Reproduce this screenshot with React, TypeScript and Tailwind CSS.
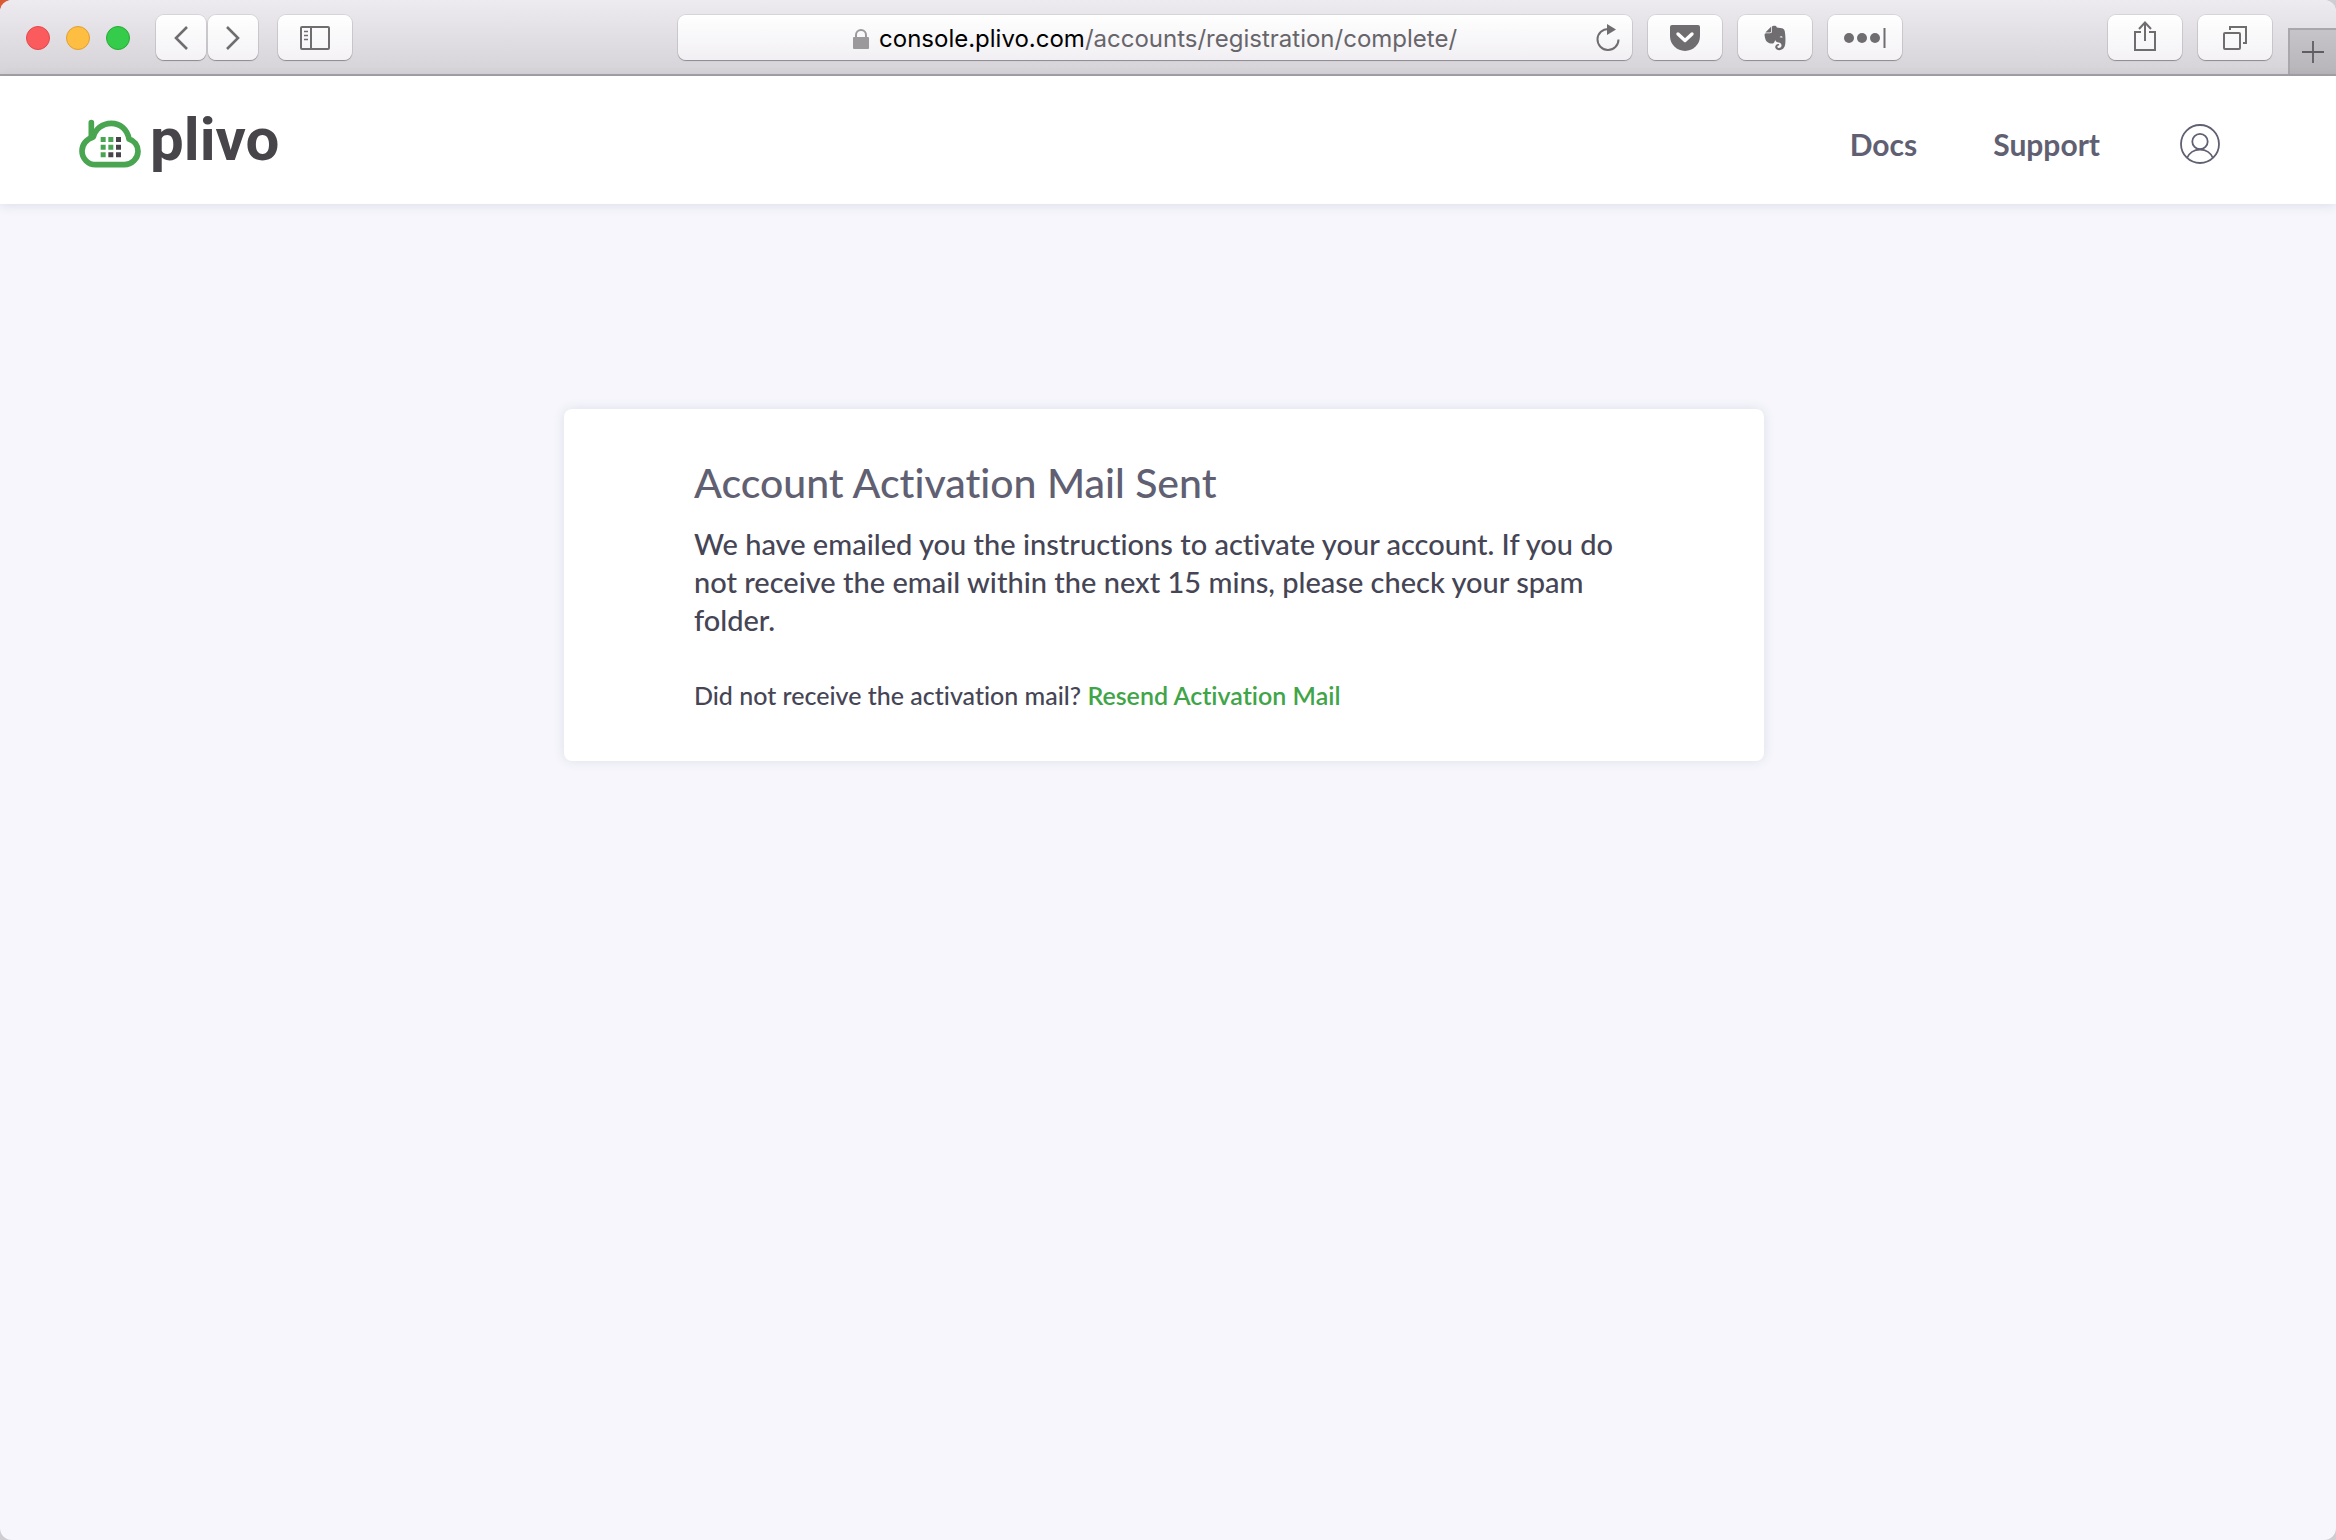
import type { ReactNode } from "react";
import { FaEvernote } from "react-icons/fa";

type ToolButtonProps = {
	label: string;
	narrow?: boolean;
	children: ReactNode;
};

function ToolButton({ label, narrow, children }: ToolButtonProps) {
	return (
		<button
			type="button"
			aria-label={label}
			className={`${narrow ? "w-[50px]" : "w-[74px]"} h-[45px] shrink-0 flex items-center justify-center rounded-lg
			bg-linear-to-b from-white to-[#f4f2f5] text-[#6f6d70]
			shadow-[0_0_0_1px_rgba(0,0,0,0.08),0_1px_1px_rgba(0,0,0,0.3)]`}
		>
			{children}
		</button>
	);
}

function BrowserBar() {
	return (
		<div className="flex items-start h-[76px] pt-[15px] pl-[26px] border-b-2 border-[#a3a0a5] bg-linear-to-b from-[#edebf0] to-[#d5d3d7]">
			{/* Window controls */}
			<div className="flex items-center gap-4 h-[45px] mr-[26px]">
				<span className="size-6 rounded-full bg-[#fc5b5e] border border-[#e2484b]" />
				<span className="size-6 rounded-full bg-[#fdbe41] border border-[#dfa034]" />
				<span className="size-6 rounded-full bg-[#35cb4b] border border-[#27aa35]" />
			</div>

			<div className="flex gap-0.5 mr-5">
				<ToolButton label="Back" narrow>
					<svg width="16" height="26" viewBox="0 0 16 26" fill="none" stroke="currentColor" strokeWidth="2.6">
						<path d="M14 2 3 13l11 11" />
					</svg>
				</ToolButton>
				<ToolButton label="Forward" narrow>
					<svg width="16" height="26" viewBox="0 0 16 26" fill="none" stroke="currentColor" strokeWidth="2.6">
						<path d="m2 2 11 11L2 24" />
					</svg>
				</ToolButton>
			</div>

			<ToolButton label="Sidebar">
				<svg width="30" height="24" viewBox="0 0 30 24" fill="none" stroke="currentColor" strokeWidth="2">
					<rect x="1" y="1" width="28" height="22" rx="1" />
					<path d="M11 1v22" />
					<path d="M4 5.5h4M4 9.5h4M4 13.5h4" strokeWidth="1.4" />
				</svg>
			</ToolButton>

			{/* Address */}
			<div className="ml-[14.1%] mr-4 flex-1 h-[45px] flex items-center rounded-lg bg-linear-to-b from-white to-[#f1eff3] shadow-[0_0_0_1px_rgba(0,0,0,0.08),0_1px_1px_rgba(0,0,0,0.3)]">
				<div className="flex-1 flex items-center justify-center gap-2.5 pl-9 pt-0.5 font-[Inter,sans-serif] text-2xl">
					<svg width="16" height="20" viewBox="0 0 16 20" className="text-[#9b999c]">
						<path d="M3 9V6a5 5 0 0 1 10 0v3" fill="none" stroke="currentColor" strokeWidth="2" />
						<rect y="8" width="16" height="12" rx="1" fill="currentColor" />
					</svg>
					<p className="text-black">
						console.plivo.com<span className="text-[#67656a]">/accounts/registration/complete/</span>
					</p>
				</div>
				<button type="button" aria-label="Reload" className="mr-3 text-[#6f6d70]">
					<svg width="24" height="28" viewBox="0 0 24 28">
						<path d="M12.5 5A10.5 10.5 0 1 0 22.5 15.5" fill="none" stroke="currentColor" strokeWidth="2" />
						<path d="M11 0v11l9-5.5z" fill="currentColor" />
					</svg>
				</button>
			</div>

			{/* Extensions */}
			<div className="flex gap-4">
				<ToolButton label="Pocket">
					<svg width="30" height="26" viewBox="0 0 30 26">
						<path d="M2 0h26a2 2 0 0 1 2 2v9a15 15 0 0 1-30 0V2a2 2 0 0 1 2-2z" fill="currentColor" />
						<path d="m8 9 7 6.5L22 9" fill="none" stroke="white" strokeWidth="3.4" strokeLinecap="round" strokeLinejoin="round" />
					</svg>
				</ToolButton>
				<ToolButton label="Evernote">
					<FaEvernote size={28} />
				</ToolButton>
				<ToolButton label="Passwords">
					<svg width="42" height="22" viewBox="0 0 42 22" fill="currentColor">
						<circle cx="5" cy="11" r="5" />
						<circle cx="18" cy="11" r="5" />
						<circle cx="31" cy="11" r="5" />
						<rect x="39.5" y="1" width="2" height="20" />
					</svg>
				</ToolButton>
			</div>

			<div className="flex gap-4 ml-[8.9%] mr-4">
				<ToolButton label="Share">
					<svg width="24" height="32" viewBox="0 0 24 32" fill="none" stroke="currentColor" strokeWidth="2" className="mb-1">
						<path d="M8 12H2v18h20V12h-6" />
						<path d="M12 21V3M6 9l6-6.5L18 9" />
					</svg>
				</ToolButton>
				<ToolButton label="Show tabs">
					<svg width="24" height="24" viewBox="0 0 24 24" fill="none" stroke="currentColor" strokeWidth="2">
						<rect x="1" y="7" width="16" height="16" rx="1" />
						<path d="M7 4V1h16v16h-3" />
					</svg>
				</ToolButton>
			</div>

			<button
				type="button"
				aria-label="New tab"
				className="self-end w-12 h-[46px] flex items-center justify-center border-l-2 border-t-2 border-[#a9a7ab] bg-linear-to-b from-[#c6c4c8] to-[#b7b5b9] text-[#5f5d61]"
			>
				<svg width="22" height="22" viewBox="0 0 22 22" stroke="currentColor" strokeWidth="1.8">
					<path d="M11 0v22M0 11h22" />
				</svg>
			</button>
		</div>
	);
}

function Logo() {
	return (
		<a href="#" className="flex items-center gap-2" aria-label="plivo">
			<svg width="64" height="50" viewBox="235 357 192 150" fill="none" className="mt-2">
				<g stroke="#4aa551" strokeWidth="17" strokeLinejoin="round" strokeLinecap="round">
					<path d="M288 494A41 41 0 0 1 247 453C247 434 260 417 281 411C286 388 308 370 335 370C362 370 383 389 388 417C404 422 415 436 415 454A41 41 0 0 1 374 494Z" />
					<path d="M275 368V410" />
				</g>
				<g fill="#4aa551">
					<path d="M303 411h15v15h-15zM326 411h15v15h-15zM303 434h15v15h-15zM326 434h15v15h-15zM303 457h15v15h-15z" />
				</g>
				<g fill="#47454a">
					<path d="M349 411h15v15h-15zM349 434h15v15h-15zM326 457h15v15h-15zM349 457h15v15h-15z" />
				</g>
			</svg>
			<span className="font-[Roboto,sans-serif] font-bold text-[60px] leading-[64px] text-[#47454a]">plivo</span>
		</a>
	);
}

function Header() {
	return (
		<header className="relative flex items-center justify-between h-32 pl-[78px] pr-[116px] bg-white shadow-[0_2px_10px_rgba(60,60,100,0.12)]">
			<Logo />
			<nav className="flex items-center pt-2 text-[30px] font-bold text-[#606072]">
				<a href="#" className="mr-[76px]">Docs</a>
				<a href="#" className="mr-20">Support</a>
				<a href="#" aria-label="Account">
					<svg width="40" height="40" viewBox="0 0 40 40" fill="none" stroke="currentColor" strokeWidth="1.8">
						<circle cx="20" cy="20" r="19" />
						<circle cx="20" cy="17.5" r="7.7" />
						<path d="M7 34c2-5 7-8.5 13-8.5S31 29 33 34" />
					</svg>
				</a>
			</nav>
		</header>
	);
}

export default function App() {
	return (
		<div className="min-h-screen flex bg-linear-to-br from-[#d9572f] to-[#cfcdd1] to-5%">
			<div className="flex-1 flex flex-col rounded-xl overflow-hidden bg-[#f6f6fc] font-[Lato,sans-serif] [font-variant-ligatures:none]">
				<BrowserBar />
				<Header />

				<main className="flex-1 pt-[205px] pr-2">
					<div className="max-w-[1200px] mx-auto px-[130px] pt-12 pb-12 rounded-lg bg-white text-[#454555] shadow-[0_0_12px_rgba(60,60,100,0.12)]">
						<h1 className="text-[41px] leading-[52px] font-medium text-[#606072]">Account Activation Mail Sent</h1>
						<p className="mt-4 text-[29px] leading-[38px] font-medium">
							We have emailed you the instructions to activate your account. If you do not receive the email within the next 15 mins, please check your spam folder.
						</p>
						<p className="mt-[38px] text-[25px] leading-9 font-medium">
							Did not receive the activation mail?{" "}
							<a href="#" className="font-semibold text-[#3fa548]">Resend Activation Mail</a>
						</p>
					</div>
				</main>
			</div>
		</div>
	);
}
